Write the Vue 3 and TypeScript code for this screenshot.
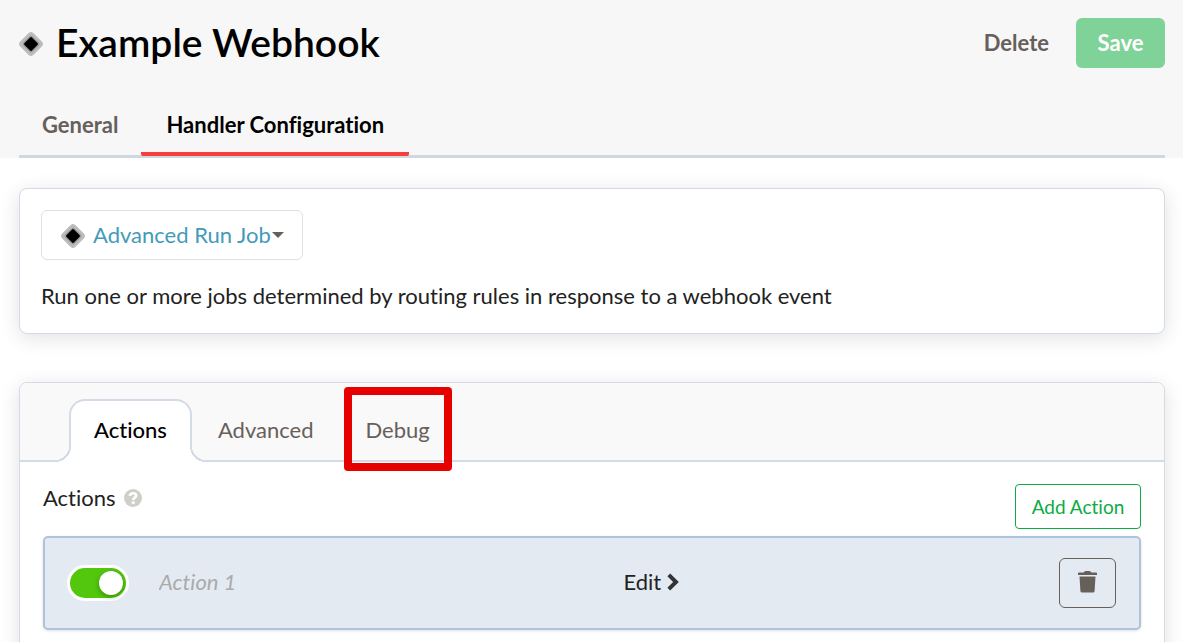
<script setup lang="ts">
import { ref } from 'vue'

const pageTabs = ['General', 'Handler Configuration']
const panelTabs = ['Actions', 'Advanced', 'Debug']
const activePage = ref('Handler Configuration')
const activePanel = ref('Actions')
const handler = ref('Advanced Run Job')
const actionName = ref('')
const enabled = ref(true)
</script>

<template>
  <div class="page">
    <header class="top">
      <div class="title-row">
        <svg class="diamond" viewBox="0 0 24 24" aria-hidden="true">
          <rect x="2.5" y="2.5" width="19" height="19" rx="4" fill="#bcbcbc" transform="rotate(45 12 12)" />
          <rect x="5.5" y="5.5" width="13" height="13" rx="2" fill="#999" transform="rotate(45 12 12)" />
          <rect x="6.8" y="6.8" width="10.4" height="10.4" rx="1" fill="#000" transform="rotate(45 12 12)" />
        </svg>
        <h1>Example Webhook</h1>
        <button type="button" class="delete">Delete</button>
        <button type="button" class="save">Save</button>
      </div>
      <nav class="page-tabs" aria-label="Webhook sections">
        <button
          v-for="tab in pageTabs"
          :key="tab"
          type="button"
          class="page-tab"
          :class="{ active: tab === activePage }"
          @click="activePage = tab"
        >{{ tab }}</button>
      </nav>
    </header>

    <main>
      <section class="card handler">
        <label class="picker">
          <svg class="diamond" viewBox="0 0 24 24" aria-hidden="true">
            <rect x="2.5" y="2.5" width="19" height="19" rx="4" fill="#bcbcbc" transform="rotate(45 12 12)" />
            <rect x="5.5" y="5.5" width="13" height="13" rx="2" fill="#999" transform="rotate(45 12 12)" />
            <rect x="6.8" y="6.8" width="10.4" height="10.4" rx="1" fill="#000" transform="rotate(45 12 12)" />
          </svg>
          <select v-model="handler" aria-label="Handler">
            <option>Advanced Run Job</option>
          </select>
          <svg class="caret" viewBox="0 0 12 6" aria-hidden="true"><path d="M0 0h12L6 6z" fill="#67605a" /></svg>
        </label>
        <p>Run one or more jobs determined by routing rules in response to a webhook event</p>
      </section>

      <section class="card panel">
        <nav class="panel-tabs" aria-label="Handler settings">
          <button
            v-for="tab in panelTabs"
            :key="tab"
            type="button"
            class="panel-tab"
            :class="{ active: tab === activePanel, marked: tab === 'Debug' }"
            @click="activePanel = tab"
          >{{ tab }}</button>
        </nav>
        <div class="body">
          <div class="actions-head">
            <h2>Actions</h2>
            <svg class="help" viewBox="0 0 18 18" aria-hidden="true">
              <circle cx="9" cy="9" r="9" fill="#cfcfca" />
              <path d="M5.8 6.9C6 5 7.4 4.2 9.1 4.2c1.8 0 3.1 1 3.1 2.5 0 2-3 1.9-3 4.2" fill="none" stroke="#fff" stroke-width="2.6" />
              <circle cx="9.2" cy="13.6" r="1.6" fill="#fff" />
            </svg>
            <button type="button" class="add">Add Action</button>
          </div>
          <div class="action">
            <input v-model="enabled" type="checkbox" class="switch" role="switch" aria-label="Action enabled" />
            <input v-model="actionName" type="text" class="name" placeholder="Action 1" aria-label="Action name" />
            <button type="button" class="edit">
              <span>Edit</span>
              <svg viewBox="0 0 12 18" aria-hidden="true"><path d="M1.800 1.800L9 9l-7.200 7.200" fill="none" stroke="#333" stroke-width="4" /></svg>
            </button>
            <button type="button" class="remove" aria-label="Remove action">
              <svg viewBox="0 0 19 22" aria-hidden="true">
                <path d="M0 2.200Q0 1.500 .8 1.500H5.500L6.500 .5Q7 0 7.700 0h3.600Q12 0 12.500 .5l1 1h4.700Q19 1.500 19 2.200V4H0zM1.500 5.500h16l-.9 14.500q-.1 1.500-1.700 1.500H4.100q-1.600 0-1.700-1.500z" fill="#67605a" />
              </svg>
            </button>
          </div>
        </div>
      </section>
    </main>
  </div>
</template>

<style>
body {
  margin: 0;
  background: #fff;
}
</style>

<style scoped>
* {
  box-sizing: border-box;
}

.page {
  height: 100vh;
  overflow: hidden;
  font: 22px/30px Lato, "Liberation Sans", sans-serif;
  font-variant-ligatures: none;
  color: #222;
}

button,
select,
input {
  margin: 0;
  padding: 0;
  border: 0;
  background: none;
  font: inherit;
  font-variant-ligatures: none;
  color: inherit;
}

button {
  cursor: pointer;
}

h1,
h2,
p {
  margin: 0;
}

.top {
  padding: 18px 18px 0 19px;
  background: #f7f7f7;
}

.title-row {
  display: flex;
  align-items: center;
  height: 50px;
}

.diamond {
  flex: none;
  width: 24px;
  height: 24px;
  margin-top: 2px;
}

h1 {
  flex: 1;
  margin-left: 13px;
  font-size: 39px;
  line-height: 48px;
  padding-bottom: 2px;
  font-weight: 600;
  color: #000;
}

.delete {
  margin-right: 27px;
  color: #67605a;
  font-weight: 700;
}

.save {
  width: 89px;
  height: 50px;
  border-radius: 6px;
  background: #7fd399;
  color: #fff;
  font-weight: 700;
}

.page-tabs {
  display: flex;
  margin-top: 28px;
  border-bottom: 3px solid #cfd8e1;
}

.page-tab {
  height: 60px;
  margin-bottom: -1px;
  padding: 2px 23px 0;
  border-bottom: 4px solid transparent;
  border-radius: 2px;
  color: #67605a;
  font-weight: 700;
}

.page-tab.active {
  padding: 2px 25px 0;
  border-bottom-color: #f63e3a;
  color: #000;
}

main {
  padding: 30px 18px 0 19px;
}

.card {
  border: 1px solid #d2dbe6;
  border-radius: 8px;
  background: #fff;
  box-shadow: 0 4px 20px rgba(0, 0, 0, 0.12);
}

.handler {
  padding: 21px 21px 22px;
}

.picker {
  display: inline-flex;
  align-items: center;
  height: 50px;
  padding: 0 18px 0 19px;
  border: 1px solid #e1e1e1;
  border-radius: 6px;
}

select {
  margin-left: 8px;
  appearance: none;
  color: #439bb9;
}

.caret {
  width: 12px;
  height: 6px;
}

.handler p {
  margin-top: 21px;
}

.panel {
  margin-top: 48px;
  height: 400px;
}

.panel-tabs {
  display: flex;
  height: 79px;
  padding: 16px 0 0 49px;
  border-bottom: 2px solid #d2dbe6;
  border-radius: 7px 7px 0 0;
  background: #f9f9f9;
}

.panel-tab {
  position: relative;
  height: 63px;
  padding: 0 24px 2px;
  border: 2px solid transparent;
  color: #67605a;
}

.panel-tab.active {
  padding: 0 23px 2px;
  border-color: #d2dbe6;
  border-bottom-color: #fff;
  border-radius: 16px 16px 0 0;
  background: #fff;
  color: #000;
  font-weight: 500;
}

.panel-tab.active::before,
.panel-tab.active::after {
  content: "";
  position: absolute;
  bottom: -2px;
  width: 16px;
  height: 16px;
}

.panel-tab.active::before {
  right: 100%;
  background: radial-gradient(circle at 0 0, #f9f9f9 14px, #d2dbe6 14px, #d2dbe6 16px, #fff 16px);
}

.panel-tab.active::after {
  left: 100%;
  background: radial-gradient(circle at 100% 0, #f9f9f9 14px, #d2dbe6 14px, #d2dbe6 16px, #fff 16px);
}

.panel-tab.marked::after {
  content: "";
  position: absolute;
  inset: -14px 2px -11px 3px;
  border: 8px solid #e60000;
  border-radius: 4px;
}

.body {
  padding: 22px 23px;
}

.actions-head {
  display: flex;
  align-items: flex-start;
}

h2 {
  font-size: 22px;
  line-height: 28px;
  font-weight: 400;
}

.help {
  width: 18px;
  height: 18px;
  margin: 5px auto 0 8px;
}

.add {
  width: 126px;
  height: 45px;
  border: 1px solid #0bab43;
  border-radius: 4px;
  color: #0bab43;
  font-size: 19px;
}

.action {
  display: flex;
  align-items: center;
  height: 94px;
  margin-top: 7px;
  padding: 0 23px 0 22px;
  border: 2px solid #afc3df;
  border-radius: 5px;
  background: #e4eaf2;
  box-shadow: 0 1px 3px rgba(0, 0, 0, 0.12);
}

.switch {
  display: flex;
  align-items: center;
  flex: none;
  width: 62px;
  height: 36px;
  padding: 0 3px;
  border: 3px solid #fff;
  border-radius: 18px;
  appearance: none;
  background: #52c70c;
}

.switch::before {
  content: "";
  width: 24px;
  height: 24px;
  border-radius: 50%;
  background: #fff;
  box-shadow: 0 2px 5px rgba(0, 40, 0, 0.35);
}

.switch:checked {
  justify-content: flex-end;
}

.name {
  flex: 16;
  min-width: 0;
  margin-left: 30px;
  padding-bottom: 2px;
}

.name::placeholder {
  color: #aaa;
  font-style: italic;
  opacity: 1;
}

.edit {
  display: flex;
  flex: 15;
  align-items: center;
  gap: 6px;
  padding-bottom: 2px;
}

.edit svg {
  width: 12px;
  height: 18px;
}

.remove {
  display: flex;
  align-items: center;
  justify-content: center;
  width: 57px;
  height: 50px;
  padding-bottom: 2px;
  border: 1px solid #67605a;
  border-radius: 6px;
}

.remove svg {
  width: 19px;
  height: 22px;
}
</style>
